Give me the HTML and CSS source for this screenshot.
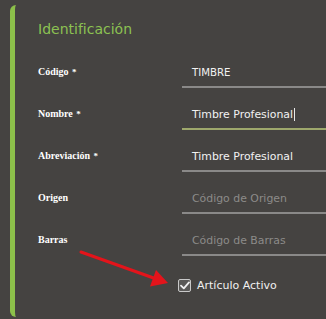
FILE: index.html
```html
<!DOCTYPE html>
<html lang="es">
<head>
<meta charset="utf-8">
<link rel="stylesheet" href="styles.css">
</head>
<body>
<div class="card">
  <h2 class="title">Identificación</h2>
  <div class="rows">
    <div class="row">
      <label class="label">Código <span class="req">*</span></label>
      <div class="field"><span class="value upper">TIMBRE</span></div>
    </div>
    <div class="row">
      <label class="label">Nombre <span class="req">*</span></label>
      <div class="field focused"><span class="value">Timbre Profesional</span><span class="caret"></span></div>
    </div>
    <div class="row">
      <label class="label">Abreviación <span class="req">*</span></label>
      <div class="field"><span class="value">Timbre Profesional</span></div>
    </div>
    <div class="row">
      <label class="label">Origen</label>
      <div class="field"><span class="placeholder">Código de Origen</span></div>
    </div>
    <div class="row">
      <label class="label">Barras</label>
      <div class="field"><span class="placeholder">Código de Barras</span></div>
    </div>
  </div>
  <div class="check-row">
    <span class="checkbox">
      <svg width="10" height="9" viewBox="0 0 10 9"><path d="M1 4.6 L3.8 7.4 L9 1.4" fill="none" stroke="#f0f0f0" stroke-width="1.8" stroke-linecap="round" stroke-linejoin="round"/></svg>
    </span>
    <span class="check-label">Artículo Activo</span>
  </div>
</div>
<svg class="arrow" width="326" height="319" viewBox="0 0 326 319">
  <line x1="81" y1="252" x2="155" y2="278.5" stroke="#e3141b" stroke-width="3" stroke-linecap="round"/>
  <polygon points="168,283 150,286.5 156,270" fill="#e3141b"/>
</svg>
</body>
</html>
```
FILE: styles.css
```css
html, body {
  margin: 0;
  padding: 0;
  background: #454341;
  overflow: hidden;
  width: 326px;
  height: 319px;
}
body {
  position: relative;
  font-family: "DejaVu Sans", sans-serif;
}
.card {
  margin: 5px 0 0 10px;
  height: 297px;
  border-left: 5px solid #8cc04a;
  border-radius: 6px 0 0 6px;
  padding: 15px 0 0 23px;
}
.title {
  margin: 0;
  font-family: "DejaVu Sans", sans-serif;
  font-weight: normal;
  font-size: 14px;
  line-height: 18px;
  color: #8cc152;
  height: 18px;
}
.rows {
  margin-top: 20px;
  display: flex;
  flex-direction: column;
  gap: 12px;
}
.row {
  display: grid;
  grid-template-columns: 144px 1fr;
  align-items: center;
  height: 30px;
}
.label {
  font-family: "Liberation Serif", serif;
  font-weight: bold;
  font-size: 10px;
  color: #ffffff;
  position: relative;
  top: -2px;
}
.req {
  margin-left: 1px;
  font-size: 9px;
}
.field {
  height: 28px;
  border-bottom: 2px solid #8a8988;
  display: flex;
  align-items: center;
  padding-left: 10px;
  font-size: 10.9px;
  white-space: nowrap;
}
.field.focused {
  border-bottom-color: #9ea86c;
}
.value {
  color: #f2f2f2;
}
.upper {
  font-size: 10.2px;
}
.placeholder {
  color: #8c8b89;
}
.caret {
  display: inline-block;
  width: 1px;
  height: 13px;
  background: #e8e8e8;
  margin-left: 1px;
}
.check-row {
  margin: 23px 0 0 140px;
  display: flex;
  align-items: center;
  gap: 6px;
}
.checkbox {
  width: 11px;
  height: 11px;
  border: 1.5px solid #c9c9c9;
  border-radius: 2px;
  background: #5a5957;
  display: flex;
  align-items: center;
  justify-content: center;
}
.check-label {
  font-size: 11px;
  color: #f0f0f0;
}
.arrow {
  position: absolute;
  left: 0;
  top: 0;
  pointer-events: none;
}
```
